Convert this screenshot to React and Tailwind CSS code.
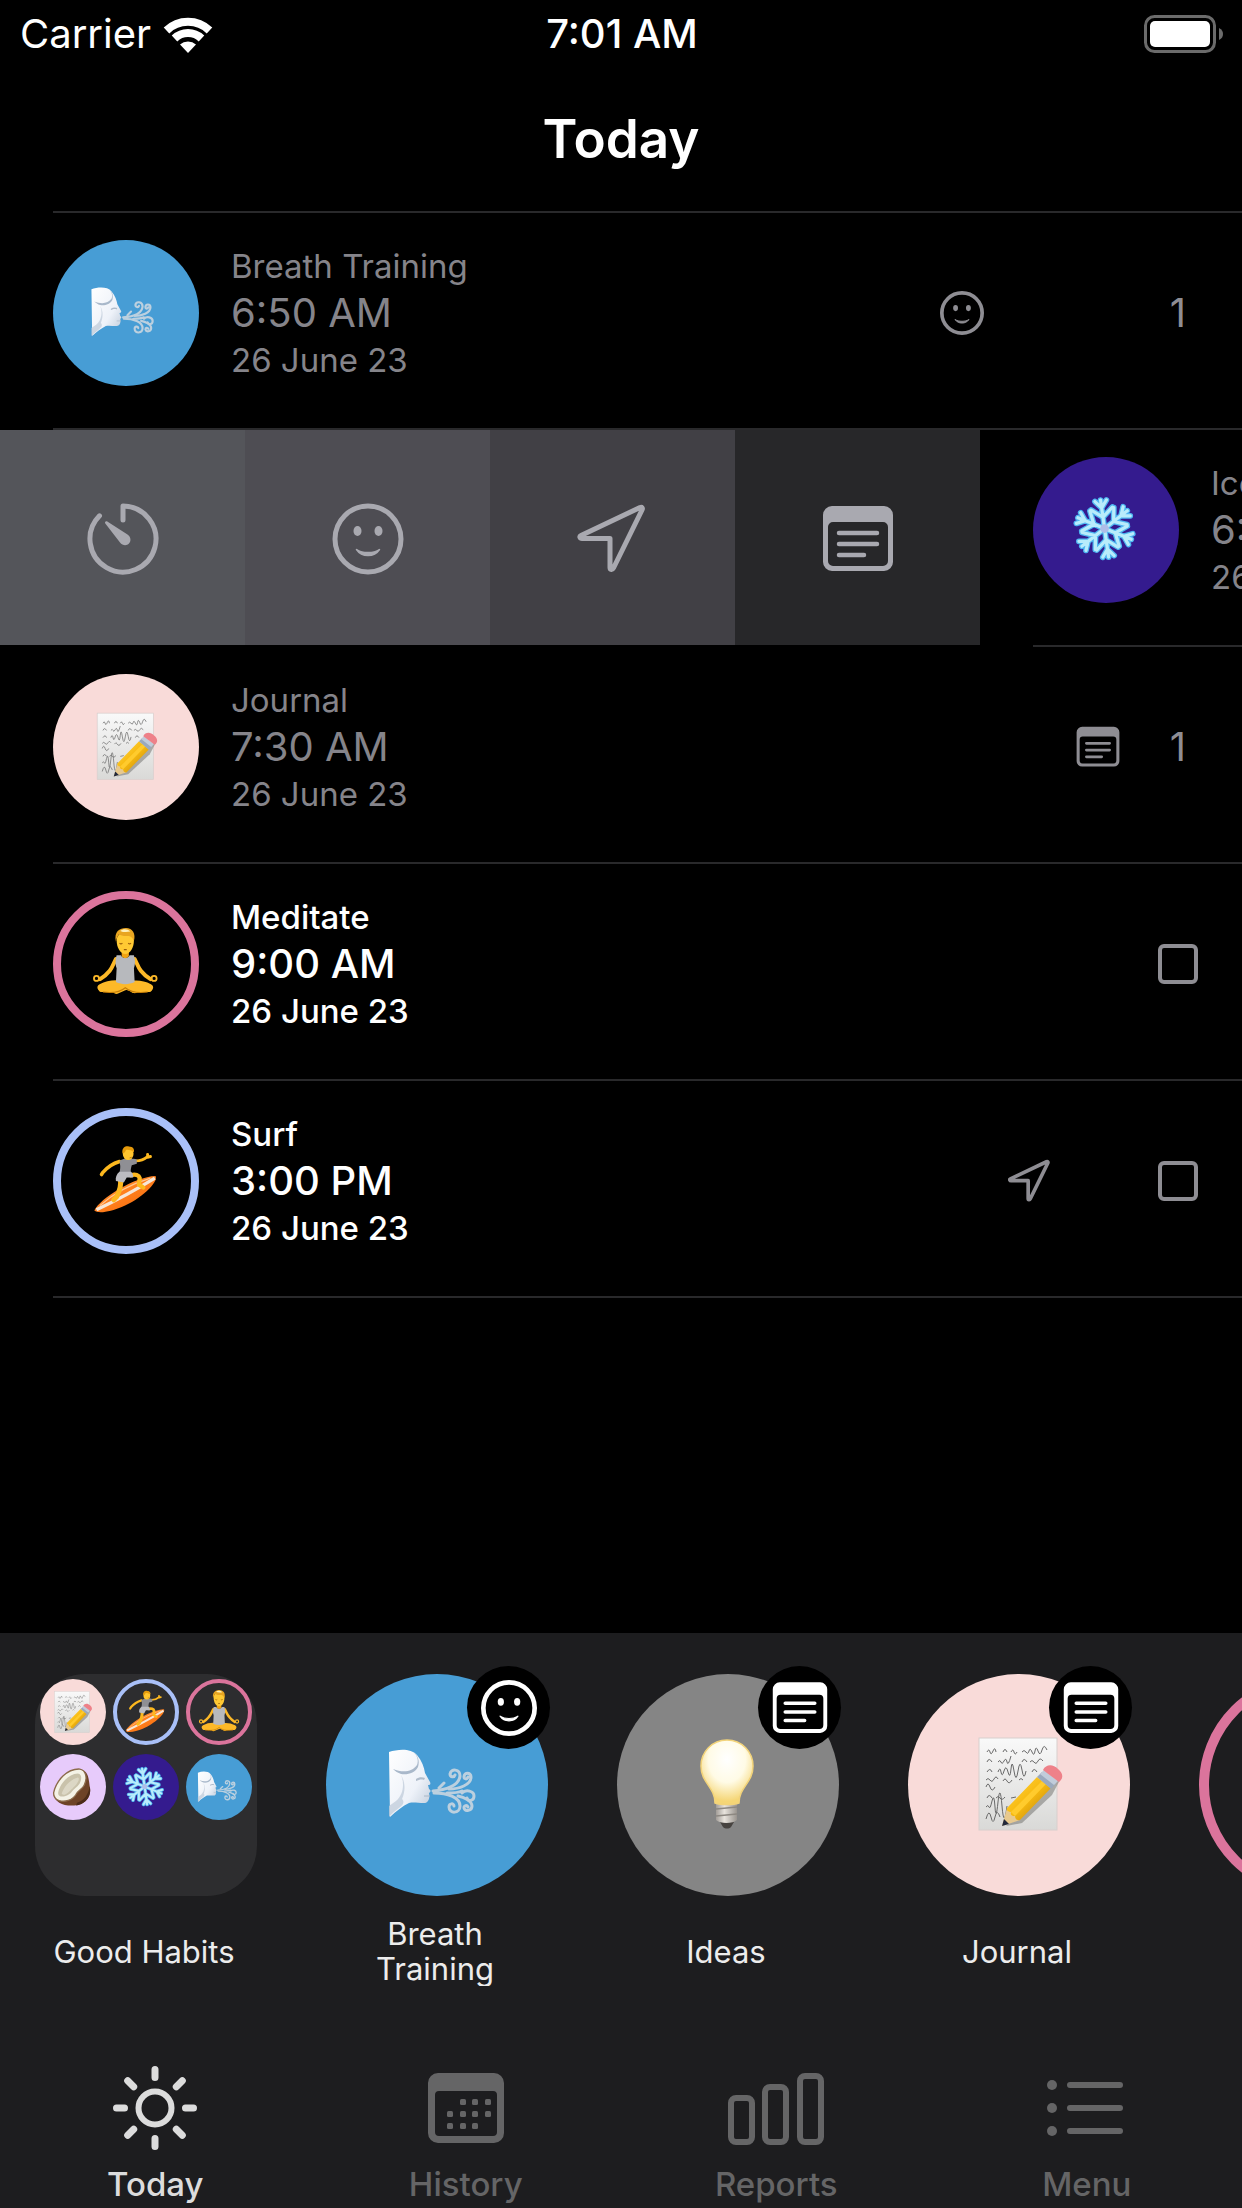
import React, { useState } from "react";

/* ---------- Line icons ---------- */

const SmileIcon = ({ className, weight = 5 }) => (
  <svg viewBox="0 0 72 72" className={className} fill="none" aria-hidden="true">
    <circle cx="36" cy="36" r="33" stroke="currentColor" strokeWidth={weight} />
    <ellipse cx="25.5" cy="28" rx="4" ry="5" fill="currentColor" />
    <ellipse cx="46.5" cy="28" rx="4" ry="5" fill="currentColor" />
    <path
      d="M24.500 46.500c3 4.500 7 6 11.500 6s8.500-1.500 11.500-6c-3 2-7 3-11.500 3s-8.500-1-11.500-3Z"
      fill="currentColor"
      stroke="currentColor"
      strokeWidth="1.500"
      strokeLinejoin="round"
    />
  </svg>
);

const NoteIcon = ({ className }) => (
  <svg viewBox="0 0 72 72" className={className} fill="none" aria-hidden="true">
    <path
      fillRule="evenodd"
      d="M10 3h52a9 9 0 0 1 9 9v47a9 9 0 0 1-9 9H10a9 9 0 0 1-9-9V12a9 9 0 0 1 9-9ZM11 19a5 5 0 0 0-5 5v34a5 5 0 0 0 5 5h50a5 5 0 0 0 5-5V24a5 5 0 0 0-5-5Z"
      fill="currentColor"
    />
    <path
      d="M17 30h38M17 41h38M17 52h25"
      stroke="currentColor"
      strokeWidth="4.500"
      strokeLinecap="round"
    />
  </svg>
);

const ArrowIcon = ({ className, weight = 5 }) => (
  <svg viewBox="0 0 72 72" className={className} fill="none" aria-hidden="true">
    <path
      d="M63 4.500 4 32.500c-2 1-1 3 1 3H33v29c0 2.500 2.500 2.500 3.500 .5L65 7c1-2 0-3.200-2-2.500Z"
      stroke="currentColor"
      strokeWidth={weight}
      strokeLinejoin="round"
    />
  </svg>
);

const TimerIcon = ({ className }) => (
  <svg viewBox="0 0 72 72" className={className} fill="none" aria-hidden="true">
    <path
      d="M36 17V3A33 33 0 1 1 12.500 12.800"
      stroke="currentColor"
      strokeWidth="5"
      strokeLinecap="round"
      strokeLinejoin="round"
    />
    <path
      d="M18.300 20.500c-1-1.600 .6-3 2-2L40.500 31.500c3.500 2.500 3.800 6.500 1.500 9s-6.500 2.200-9-1Z"
      fill="currentColor"
    />
  </svg>
);

const SunIcon = ({ className }) => (
  <svg viewBox="0 0 84 84" className={className} fill="none" aria-hidden="true">
    <circle cx="42" cy="42" r="16.500" stroke="currentColor" strokeWidth="6" />
    <path
      d="M42 3.500v8M42 72.500v8M3.500 42h8M72.500 42h8M14.700 14.700l6 6M63.300 63.300l6 6M69.300 14.700l-6 6M20.700 63.300l-6 6"
      stroke="currentColor"
      strokeWidth="7"
      strokeLinecap="round"
    />
  </svg>
);

const calendarDots = [
  [39, 36], [51, 36], [64, 36],
  [26, 48], [39, 48], [51, 48], [64, 48],
  [26, 60], [39, 60], [51, 60],
];

const CalendarIcon = ({ className }) => (
  <svg viewBox="0 0 84 84" className={className} fill="none" aria-hidden="true">
    <path
      fillRule="evenodd"
      d="M14 7h56a10 10 0 0 1 10 10v50a10 10 0 0 1-10 10H14A10 10 0 0 1 4 67V17A10 10 0 0 1 14 7ZM15 25a4 4 0 0 0-4 4v37a4 4 0 0 0 4 4h54a4 4 0 0 0 4-4V29a4 4 0 0 0-4-4Z"
      fill="currentColor"
    />
    {calendarDots.map(([x, y]) => (
      <rect key={`${x}-${y}`} x={x - 3} y={y - 3} width="6" height="6" rx="1.500" fill="currentColor" />
    ))}
  </svg>
);

const BarsIcon = ({ className }) => (
  <svg viewBox="0 0 98 84" className={className} fill="none" aria-hidden="true">
    <g stroke="currentColor" strokeWidth="6">
      <rect x="4" y="32" width="21" height="44" rx="5" />
      <rect x="38" y="21" width="21" height="55" rx="5" />
      <rect x="73" y="10" width="21" height="66" rx="5" />
    </g>
  </svg>
);

const ListIcon = ({ className }) => (
  <svg viewBox="0 0 84 84" className={className} fill="none" aria-hidden="true">
    <g fill="currentColor">
      <circle cx="7" cy="19" r="5" />
      <circle cx="7" cy="42" r="5" />
      <circle cx="7" cy="65" r="5" />
    </g>
    <path
      d="M25 19h50M25 42h50M25 65h50"
      stroke="currentColor"
      strokeWidth="6"
      strokeLinecap="round"
    />
  </svg>
);

const WifiIcon = () => (
  <svg viewBox="0 0 50 37" className="h-[37px] w-[50px]" aria-hidden="true">
    <g fill="none" stroke="#fff" strokeWidth="8">
      <path d="M3.500 14.500a31 31 0 0 1 43 0" />
      <path d="M11.500 22.500a19.500 19.500 0 0 1 27 0" />
    </g>
    <path d="M25 37l-8-8.500a12 12 0 0 1 16 0Z" fill="#fff" />
  </svg>
);

const BatteryIcon = () => (
  <svg viewBox="0 0 80 38" className="h-[38px] w-[80px]" fill="none" aria-hidden="true">
    <rect x="1.500" y="1.500" width="69" height="35" rx="9" stroke="#6b6b6b" strokeWidth="3" />
    <rect x="6" y="6" width="60" height="26" rx="5" fill="#fff" />
    <path d="M75 13c3 1.500 4 3.500 4 6s-1 4.500-4 6Z" fill="#6b6b6b" />
  </svg>
);

/* ---------- Habit artwork, all on a 100 x 100 box ---------- */

const BreathArt = () => (
  <>
    <defs>
      <linearGradient id="breathHead" x1="0" y1="0" x2="1" y2="1">
        <stop offset="0" stopColor="#ffffff" />
        <stop offset=".6" stopColor="#eef2f9" />
        <stop offset="1" stopColor="#b9c6d6" />
      </linearGradient>
    </defs>
    <path
      d="M2 17c9-3 22-4 28 3 5 6 7 12 8 18l5 9c1 2 0 3-2 3l1 4c2 1 2 3 0 4 1 4 0 10-5 10-6 0-11-1-15 0-6 3-13 8-19 14Z"
      fill="url(#breathHead)"
    />
    <path d="M14 40c4 9 2 20-5 26l-7 5v11c5-6 11-9 14-13 1-3 0-4-1-5 3-7 4-16-1-24Z" fill="#c3cedc" opacity=".8" />
    <path d="M14 39c-3-1-6-3-8-5 10 4 19 3 24-4 2-5 0-10-4-13 5 3 7 9 5 15-3 6-10 8-17 7Z" fill="#a9b8ca" />
    <path d="M29 44c3-2 6-2 9-1l-1 2c-3-1-5 0-8 1Z" fill="#b0bccb" />
    <path d="M37 61l6 0" stroke="#aab8c8" strokeWidth="1" />
    <g fill="none" stroke="#bcd0df" strokeWidth="3" strokeLinecap="round">
      <path d="M46 56c12-1 26-5 27-15 0-7-9-8-10-2 0 3 4 4 5 1" />
      <path d="M52 53l5-5M62 54c10 0 22-4 22-12 0-5-7-5-7 0 0 2 3 3 4 0" />
      <path d="M47 58c13 0 26 4 26 13 0 8-11 8-11 1 0-4 5-4 5-1" />
      <path d="M60 58c6 0 11 0 15-2M75 58c4-4 12-2 12 3 0 5-6 6-7 2" />
      <path d="M71 61c6 1 14 5 14 10 0 5-7 6-8 2 0-3 3-3 4-1" />
    </g>
  </>
);

const handwriting = [
  "M18 17q2-4 3 0t3-1 3 1M34 17q2-5 4 0M42 17q2-4 3 0t3 0M53 17q2-3 4 0t3-1 3 1 3-1 3 0 4-1 5 0",
  "M18 27q2-5 5 0M29 27q2-3 3 0t3-1 3 1 4-6M53 27q2-5 5 0M61 27q2-3 4 0t4-1 5 0",
  "M18 37q3-5 5 0M29 37q2-6 3 0t3-1 4 1 3-3 3 2 4 0 4-1 4 1M63 37q2-5 5 0",
  "M17 45q2-3 4 0t4-1 4 0M34 46q2-4 4 0t5-1M50 45q2-3 4 0",
  "M17 52q2-6 4 0t5 0",
  "M18 63q2-5 5 0M27 63q2-3 4 0t5-1M42 63l5-1",
  "M17 72q2-3 3 0t3-6 3 6 3-5 4 4 5 0",
  "M17 84q3-11 5-2t4 0 5 0",
];

const JournalArt = () => (
  <>
    <defs>
      <linearGradient id="paper" x1="0" y1="0" x2="0" y2="1">
        <stop offset="0" stopColor="#f9f9f9" />
        <stop offset="1" stopColor="#d9d9d7" />
      </linearGradient>
      <linearGradient id="pencil" x1="0" y1="0" x2="1" y2="1">
        <stop offset="0" stopColor="#ffd84a" />
        <stop offset=".5" stopColor="#f7b90f" />
        <stop offset="1" stopColor="#b07d16" />
      </linearGradient>
    </defs>
    <rect x="10" y="3" width="78" height="92" fill="url(#paper)" stroke="#d8cfcd" strokeWidth="1" />
    <g fill="none" stroke="#6a6a6a" strokeWidth="1">
      {handwriting.map((d) => (
        <path key={d} d={d} />
      ))}
    </g>
    <path d="M37 91l16-3 30-28 9-17-4 2Z" fill="#6b6b68" opacity=".5" />
    <path d="M33 91l5-18 13 12Z" fill="#e8c98e" />
    <path d="M33 91l2-7 5 5Z" fill="#22283a" />
    <path d="M38 73l30-31 14 11-31 32c-3 1-5-1-5-4-3 0-5-1-4-4-3 0-5-2-4-4Z" fill="url(#pencil)" />
    <path d="M42 77l31-31 4 3-31 32Z" fill="#ffcb2d" />
    <path d="M68 42l5-5 14 11-5 6Z" fill="#9aa9bd" />
    <path d="M71 39l4-4 14 11-4 4Z" fill="#c1ccda" />
    <path d="M74 35c3-6 10-6 15-1 5 4 6 9 1 13Z" fill="#ee8189" />
  </>
);

const SurfArt = () => (
  <>
    <defs>
      <linearGradient id="board" x1="0" y1="0" x2="1" y2="1">
        <stop offset="0" stopColor="#ffa94d" />
        <stop offset=".5" stopColor="#ff7e1c" />
        <stop offset="1" stopColor="#f2690b" />
      </linearGradient>
    </defs>
    <path d="M6 91C14 74 62 44 91 43c5 8-21 33-47 43-14 6-32 10-38 5Z" fill="url(#board)" />
    <path d="M9 90C30 80 66 61 90 46" stroke="#f6e7d8" strokeWidth="4.500" fill="none" />
    <path d="M14 84C32 68 58 54 84 46" stroke="#ffc894" strokeWidth="1.500" fill="none" />
    <g fill="none" stroke="#fdb81e" strokeLinecap="round" strokeLinejoin="round">
      <path d="M41 23C31 26 24 31 18 38l-2 3" strokeWidth="5" />
      <path d="M64 22c7 0 11-2 16-6M80 17l0-4M80 17l4-1" strokeWidth="4" />
      <path d="M42 47c2 9-1 17-5 25l-4 4" strokeWidth="7" />
      <path d="M57 42c6-2 11 0 12 4l-1 9 6 4" strokeWidth="6" />
    </g>
    <path d="M41 22c5-3 10-4 15-3 3 0 6 0 9 1l0 6-7 2c-1 4-2 7-1 11l-16-1c1-4 1-7 1-9Z" fill="#8f8f94" />
    <path d="M41 37l16 0c2 2 3 4 3 8l-9 0-4 7-11-2c-1-5 1-10 5-13Z" fill="#bcbcc1" />
    <ellipse cx="53" cy="12" rx="7.500" ry="9" fill="#ffc42e" />
    <path d="M45 11c-1-8 5-10 9-9 6 0 8 4 7 8-4-3-9-4-11-3-2 4-3 5-5 4Z" fill="#e59a0b" />
    <path d="M55 18l3-1" stroke="#a76a06" strokeWidth="1" />
  </>
);

const MeditateArt = () => (
  <>
    <g fill="none" stroke="#fdb928" strokeLinecap="round" strokeLinejoin="round">
      <path d="M36 43C31 52 31 60 14 71" strokeWidth="5.500" />
      <path d="M62 43c5 9 5 17 22 28" strokeWidth="5.500" />
      <circle cx="9" cy="70" r="3.500" strokeWidth="2.500" />
      <circle cx="89" cy="70" r="3.500" strokeWidth="2.500" />
      <path d="M16 83C31 75 50 78 62 85" strokeWidth="11" />
      <path d="M82 83C67 75 49 79 37 86" strokeWidth="11" />
      <path d="M17 84l20 1M81 84l-20 1" strokeWidth="10" />
    </g>
    <path d="M18 89c15 2 24 0 31-6 7 6 16 8 31 6" fill="none" stroke="#c67d06" strokeWidth="1.500" />
    <path d="M37 38h6c2 5 10 5 12 0h6c2 8 2 12 0 18l1 19c-8 4-18 4-26 0l1-19c-2-6-2-10 0-18Z" fill="#b7b9bd" />
    <path d="M44 29h10v10c-2 4-8 4-10 0Z" fill="#f0a313" />
    <path d="M37 17c0-15 24-15 24 0 0 10-5 19-12 19s-12-9-12-19Z" fill="#ffc933" />
    <path d="M36 19C33 5 41 0 50 0c9 0 14 8 11 18-2-5-4-6-7-7-7 1-11-1-14-2-2 3-3 5-4 10Z" fill="#e8a521" />
    <path d="M42 4c4-3 10-3 14 1-5 1-10 1-14-1Z" fill="#fff0b8" />
    <path d="M41 21q2 2 4 0M53 21q2 2 4 0M47 30h4" fill="none" stroke="#9a5d08" strokeWidth="1.500" />
  </>
);

const snowArms = [0, 60, 120, 180, 240, 300];

const SnowArt = () => (
  <>
    <g fill="none" stroke="#4fb6f1" strokeWidth="8" strokeLinecap="round">
      {snowArms.map((a) => (
        <path key={a} transform={`rotate(${a - 8} 48 48)`} d="M48 48V8M48 32L33 20M48 32L63 20M48 19L40 9M48 19L56 9" />
      ))}
    </g>
    <g fill="none" stroke="#b9ecfb" strokeWidth="4.500" strokeLinecap="round">
      {snowArms.map((a) => (
        <path key={a} transform={`rotate(${a - 8} 48 48)`} d="M48 48V8M48 32L33 20M48 32L63 20M48 19L40 9M48 19L56 9" />
      ))}
    </g>
    <circle cx="48" cy="48" r="6" fill="#aebde8" />
  </>
);

const CoconutArt = () => (
  <>
    <path d="M8 66C12 36 38 6 68 10c16 2 18 18 20 36 6 22-8 42-34 44-24 2-44-8-46-24Z" fill="#6e4327" />
    <path d="M60 84c16-4 26-20 28-36 6 22-10 40-30 42Z" fill="#4c2c19" />
    <path d="M8 62C14 34 38 8 66 9c14 2 18 20 10 36-4 8-14 12-18 20-8 14-26 18-38 14-8-3-12-9-12-17Z" fill="#f4f2e6" stroke="#8b6a4b" strokeWidth="3" />
    <path d="M18 62c4-20 22-42 44-43 9 1 9 12 4 22-5 8-14 12-18 19-7 10-30 16-30 2Z" fill="#c9c2ab" />
    <path d="M26 64c4-14 18-32 36-36 6 2-2 16-10 22-8 8-20 22-26 14Z" fill="#dcd7c5" />
  </>
);

const BulbArt = () => (
  <>
    <defs>
      <radialGradient id="glass" cx=".5" cy=".3" r=".65">
        <stop offset="0" stopColor="#ffffff" />
        <stop offset=".55" stopColor="#fffbe6" />
        <stop offset="1" stopColor="#f5d676" />
      </radialGradient>
      <linearGradient id="socket" x1="0" y1="0" x2="1" y2="0">
        <stop offset="0" stopColor="#a29d98" />
        <stop offset=".4" stopColor="#e9e4de" />
        <stop offset="1" stopColor="#98938e" />
      </linearGradient>
    </defs>
    <path d="M42 87h14l-3 5c-2 2-6 2-8 0Z" fill="#474340" />
    <path d="M38 67h21v18c-4 4-17 4-21 0Z" fill="url(#socket)" />
    <path d="M38 74l21-2M38 81l21-2" stroke="#8d8882" strokeWidth="1.500" />
    <path
      d="M49 5c15 0 26 12 26 26 0 17-14 21-14 37-6 2-18 2-24 0 0-16-14-20-14-37C23 17 34 5 49 5Z"
      fill="url(#glass)"
      stroke="#f2d37a"
      strokeWidth="1.500"
    />
  </>
);

const art = {
  breath: BreathArt,
  journal: JournalArt,
  surf: SurfArt,
  meditate: MeditateArt,
  snow: SnowArt,
  coconut: CoconutArt,
  bulb: BulbArt,
};

const circleColors = {
  breath: "bg-[#479dd5]",
  journal: "bg-[#f9dbd9]",
  surf: "border-[#a9c0f8]",
  meditate: "border-[#db749c]",
  snow: "bg-[#341b8e]",
  coconut: "bg-[#e7cbfb]",
  bulb: "bg-[#858585]",
};

const outlined = ["surf", "meditate"];

const circleSizes = {
  mini: { box: "size-[66px]", border: "border-4", art: "size-[45px]" },
  row: { box: "size-[146px]", border: "border-8", art: "size-[72px]" },
  tray: { box: "size-[222px]", border: "border-10", art: "size-[100px]" },
};

const HabitCircle = ({ kind, size }) => {
  const Art = art[kind];
  const s = circleSizes[size];
  return (
    <div
      className={`flex shrink-0 items-center justify-center rounded-full ${s.box} ${circleColors[kind]} ${
        outlined.includes(kind) ? s.border : ""
      }`}
    >
      <svg viewBox="0 0 100 100" className={`shrink-0 ${s.art}`} aria-hidden="true">
        <Art />
      </svg>
    </div>
  );
};

/* ---------- Data ---------- */

const entries = [
  { id: "breath", name: "Breath Training", time: "6:50 AM", date: "26 June 23", count: 1, features: ["smile"] },
  { id: "snow", name: "Ice Bath", time: "6:55 AM", date: "26 June 23", count: 1, features: [], swiped: true },
  { id: "journal", name: "Journal", time: "7:30 AM", date: "26 June 23", count: 1, features: ["note"] },
  { id: "meditate", name: "Meditate", time: "9:00 AM", date: "26 June 23", features: [] },
  { id: "surf", name: "Surf", time: "3:00 PM", date: "26 June 23", features: ["arrow"] },
];

const featureSlots = [
  { key: "smile", Icon: SmileIcon },
  { key: "arrow", Icon: ArrowIcon },
  { key: "note", Icon: NoteIcon },
];

const swipeActions = [
  { label: "Timer", Icon: TimerIcon, bg: "bg-[#54555a]" },
  { label: "Mood", Icon: SmileIcon, bg: "bg-[#4e4d53]" },
  { label: "Location", Icon: ArrowIcon, bg: "bg-[#414045]" },
  { label: "Note", Icon: NoteIcon, bg: "bg-[#272729]" },
];

const folder = ["journal", "surf", "meditate", "coconut", "snow", "breath"];

const trayItems = [
  { kind: "breath", name: "Breath Training", Badge: SmileIcon },
  { kind: "bulb", name: "Ideas", Badge: NoteIcon },
  { kind: "journal", name: "Journal", Badge: NoteIcon },
  { kind: "meditate", name: "Meditate" },
];

const tabs = [
  { id: "today", label: "Today", Icon: SunIcon, size: "size-[84px]" },
  { id: "history", label: "History", Icon: CalendarIcon, size: "size-[84px]" },
  { id: "reports", label: "Reports", Icon: BarsIcon, size: "h-[84px] w-[98px]" },
  { id: "menu", label: "Menu", Icon: ListIcon, size: "size-[84px]" },
];

/* ---------- Sections ---------- */

const StatusBar = () => (
  <div className="grid grid-cols-3 items-center pt-[10px] pr-[18px] pl-[20px] text-[40px] leading-[48px]">
    <div className="flex items-center gap-3">
      <span>Carrier</span>
      <WifiIcon />
    </div>
    <span className="text-center font-medium">7:01 AM</span>
    <div className="flex justify-end">
      <BatteryIcon />
    </div>
  </div>
);

const EntryRow = ({ entry, done, onToggle }) => {
  const logged = Boolean(entry.count);
  return (
    <div className="ml-[53px] flex h-[217px] grow items-start border-b-2 border-[#29292b] pt-[27px]">
      <HabitCircle kind={entry.id} size="row" />
      <div
        className={`ml-[32px] flex h-[146px] grow flex-col justify-center text-[33px] leading-[40px] whitespace-nowrap ${
          logged ? "text-[#85848a]" : "font-medium text-white"
        }`}
      >
        <p>{entry.name}</p>
        <p className="text-[40px] leading-[54px]">{entry.time}</p>
        <p>{entry.date}</p>
      </div>
      <div className="flex h-[146px] shrink-0 items-center pr-[18px] text-[#8e8d93]">
        {featureSlots.map(({ key, Icon }) => (
          <div key={key} className="flex w-[68px] justify-center">
            {entry.features.includes(key) && <Icon className="size-[44px]" weight={6} />}
          </div>
        ))}
        <div className="flex w-[92px] justify-center">
          {logged ? (
            <span className="text-[40px] leading-[48px]">{entry.count}</span>
          ) : (
            <input
              type="checkbox"
              aria-label={`Complete ${entry.name}`}
              checked={done}
              onChange={onToggle}
              className="size-[40px] appearance-none rounded-md border-4 border-[#8e8d93] checked:bg-[#8e8d93]"
            />
          )}
        </div>
      </div>
    </div>
  );
};

const SwipeActions = () => (
  <div className="flex h-[215px] shrink-0">
    {swipeActions.map(({ label, Icon, bg }) => (
      <button
        key={label}
        type="button"
        aria-label={label}
        className={`flex w-[245px] items-center justify-center pt-[2px] text-[#a9a9b0] ${bg}`}
      >
        <Icon className="size-[72px]" />
      </button>
    ))}
  </div>
);

const HabitTray = () => (
  <div className="flex gap-[69px] overflow-hidden pt-[41px] pl-[35px] text-[31px] leading-[35px] text-[#ececec]">
    <button type="button" className="flex w-[222px] shrink-0 flex-col">
      <div className="grid size-[222px] grid-cols-3 content-start justify-items-center gap-y-[9px] rounded-[50px] bg-[#2d2d2f] px-[1px] pt-[5px]">
        {folder.map((kind) => (
          <HabitCircle key={kind} kind={kind} size="mini" />
        ))}
      </div>
      <span className="mt-5 flex h-[70px] w-[218px] items-center justify-center">Good Habits</span>
    </button>
    {trayItems.map(({ kind, name, Badge }) => (
      <button key={kind} type="button" className="flex w-[222px] shrink-0 flex-col">
        <div className="relative">
          <HabitCircle kind={kind} size="tray" />
          {Badge && (
            <div className="absolute -top-2 -right-[2px] flex size-[83px] items-center justify-center rounded-full bg-black text-white">
              <Badge className="size-[56px]" weight={6} />
            </div>
          )}
        </div>
        <span className="mt-5 flex h-[70px] w-[218px] items-center justify-center px-6">{name}</span>
      </button>
    ))}
  </div>
);

const App = () => {
  const [activeTab, setActiveTab] = useState("today");
  const [doneIds, setDoneIds] = useState([]);

  const toggleDone = (id) => {
    setDoneIds((ids) => (ids.includes(id) ? ids.filter((i) => i !== id) : [...ids, id]));
  };

  return (
    <div className="flex min-h-screen flex-col overflow-hidden bg-black font-[Inter,'Open_Sans',sans-serif] text-white">
      <header>
        <StatusBar />
        <h1 className="pt-[49px] pb-[40px] text-center text-[53px] leading-[64px] font-semibold">Today</h1>
      </header>

      <main>
        <div className="ml-[53px] border-t-2 border-[#29292b]" />
        <ul>
          {entries.map((entry) => (
            <li key={entry.id} className="flex overflow-hidden">
              {entry.swiped && <SwipeActions />}
              <EntryRow entry={entry} done={doneIds.includes(entry.id)} onToggle={() => toggleDone(entry.id)} />
            </li>
          ))}
        </ul>
      </main>

      <footer className="mt-auto bg-[#1d1d1f]">
        <HabitTray />
        <nav className="grid grid-cols-4 pt-20 pb-1">
          {tabs.map(({ id, label, Icon, size }) => (
            <a
              key={id}
              href={`#${id}`}
              onClick={() => setActiveTab(id)}
              className={`flex flex-col items-center gap-[14px] text-[33px] leading-[40px] font-medium ${
                activeTab === id ? "text-[#dcdcdc]" : "text-[#656566]"
              }`}
            >
              <Icon className={size} />
              {label}
            </a>
          ))}
        </nav>
      </footer>
    </div>
  );
};

export default App;
